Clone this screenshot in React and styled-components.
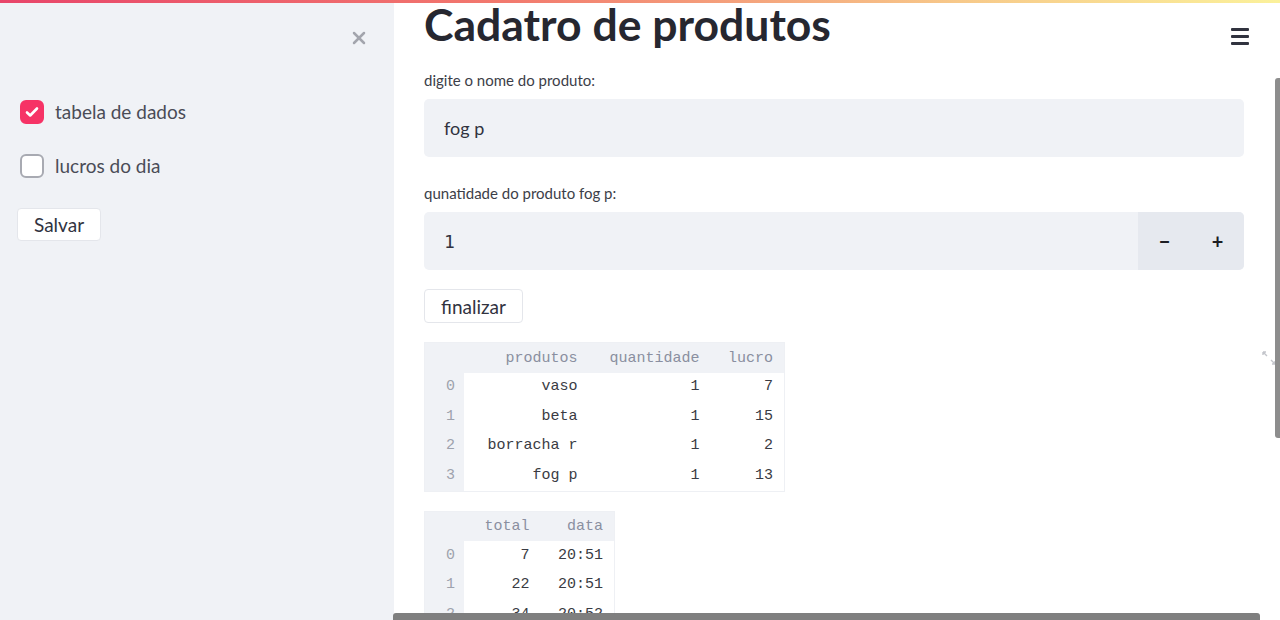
import React from 'react'
import styled, {createGlobalStyle} from 'styled-components'
import {X} from 'lucide-react'

const colors = {
  text: '#31333f',
  dark: '#262730',
  gray: '#f0f2f6',
  grayDark: '#e6e9ef',
  muted: '#8b8e99',
  accent: '#f63366',
}

const GlobalStyle = createGlobalStyle`
  html, body {
    margin: 0;
    padding: 0;
    height: 620px;
    overflow: hidden;
    background: #fff;
    font-family: Lato, "Noto Sans", sans-serif;
    color: ${colors.text};
  }
`

const Page = styled.div`
  position: relative;
  width: 1280px;
  height: 620px;
  overflow: hidden;
  display: flex;
`

// top decoration line, drawn over the page like streamlit's
const Decoration = styled.div`
  position: absolute;
  top: 0;
  left: 0;
  right: 0;
  height: 3px;
  z-index: 2;
  background: linear-gradient(90deg, #e8456a 0%, #f27a6e 40%, #f7c98a 75%, #fbf19b 100%);
`

const Sidebar = styled.aside`
  width: 394px;
  flex: none;
  background: ${colors.gray};
  padding: 3px 17px 0 17px;
  box-sizing: border-box;
  display: flex;
  flex-direction: column;
  align-items: flex-start;
  & > * {
    flex: none;
  }
`

const CloseRow = styled.div`
  align-self: stretch;
  display: flex;
  justify-content: flex-end;
  padding: 25px 8px 0 0;
  color: #a3a5ad;
  height: 22px;
`

const CheckRow = styled.label`
  display: flex;
  align-items: center;
  gap: 11px;
  margin-top: ${p => p.$top}px;
  margin-left: 3px;
  font-size: 19px;
  line-height: 22px;
  color: #4a4c56;
  height: 24px;
`

const Box = styled.span`
  width: 24px;
  height: 24px;
  box-sizing: border-box;
  border-radius: 6px;
  display: flex;
  align-items: center;
  justify-content: center;
  background: ${p => (p.$checked ? colors.accent : '#fff')};
  border: 2px solid ${p => (p.$checked ? colors.accent : '#a8aab2')};
`

const Button = styled.button`
  font-family: Lato, "Noto Sans", sans-serif;
  background: #fff;
  color: ${colors.text};
  border: 1px solid #e4e6eb;
  border-radius: 4px;
  padding: 0 ${p => p.$pad}px;
  height: ${p => p.$h}px;
  font-size: ${p => p.$size}px;
  margin-top: ${p => p.$top}px;
`

const Main = styled.main`
  flex: 1;
  padding: 0 36px 0 30px;
  display: flex;
  flex-direction: column;
  align-items: flex-start;
  & > * {
    flex: none;
  }
`

const Title = styled.h1`
  margin: 0;
  font-size: 44.5px;
  line-height: 48px;
  font-weight: 700;
  color: ${colors.dark};
`

const Label = styled.div`
  font-size: 15px;
  color: #3c3e48;
  margin-top: ${p => p.$top}px;
  line-height: 18px;
`

const Field = styled.div`
  align-self: stretch;
  margin-top: ${p => p.$top}px;
  height: 58px;
  background: ${colors.gray};
  border-radius: 5px;
  display: flex;
  align-items: center;
  overflow: hidden;
`

const FieldText = styled.span`
  flex: 1;
  padding-left: 20px;
  font-size: 18px;
  color: ${colors.text};
  font-family: ${p => (p.$mono ? '"DejaVu Sans Mono", monospace' : 'Lato, "Noto Sans", sans-serif')};
`

const Steppers = styled.div`
  width: 106px;
  height: 100%;
  background: ${colors.grayDark};
  display: flex;
`

const Step = styled.span`
  flex: 1;
  display: flex;
  align-items: center;
  justify-content: center;
  font-size: 20px;
  font-weight: 700;
  color: #1d1e24;
`

const Table = styled.table`
  margin-top: ${p => p.$top}px;
  border-collapse: collapse;
  font-family: "Liberation Mono", monospace;
  font-size: 15px;
  line-height: 18px;
  table-layout: fixed;
  border: 1px solid #eef0f4;
`

const Th = styled.th`
  background: ${colors.gray};
  color: #8a8fa0;
  font-weight: 400;
  text-align: right;
  height: 30px;
  padding: 2px 11px 0 0;
  width: ${p => p.$w}px;
  box-sizing: border-box;
`

const Idx = styled.th`
  background: ${colors.gray};
  color: #9ea2ad;
  font-weight: 400;
  text-align: left;
  padding: 0 0 0 21px;
  height: 29.5px;
`

const Td = styled.td`
  background: #fff;
  color: #3a3b43;
  text-align: right;
  padding: 0 11px 0 0;
  height: 29.5px;
`

const Hamburger = styled.div`
  position: absolute;
  top: 28px;
  right: 31px;
  width: 18px;
  display: flex;
  flex-direction: column;
  gap: 4.5px;
  span {
    height: 2.5px;
    background: #31333f;
    border-radius: 1px;
  }
`

const VScroll = styled.div`
  position: absolute;
  right: 0;
  top: 78px;
  width: 5px;
  height: 360px;
  background: #8d8d8d;
  border-radius: 3px 0 0 3px;
`

const HScroll = styled.div`
  position: absolute;
  left: 393px;
  bottom: 0;
  width: 867px;
  height: 7px;
  background: #7f7f7f;
  border-radius: 3px 3px 0 0;
`

const Expand = styled.div`
  position: absolute;
  right: 4px;
  top: 349px;
  color: #c3c5cb;
`

const DataTable = ({top, columns, widths, rows}) => (
  <Table $top={top}>
    <thead>
      <tr>
        <Th $w={39} />
        {columns.map((c, i) => (
          <Th key={c} $w={widths[i]}>{c}</Th>
        ))}
      </tr>
    </thead>
    <tbody>
      {rows.map((r, i) => (
        <tr key={i}>
          <Idx>{i}</Idx>
          {r.map((v, j) => (
            <Td key={j}>{v}</Td>
          ))}
        </tr>
      ))}
    </tbody>
  </Table>
)

const App = () => (
  <Page>
    <GlobalStyle />
    <Decoration />
    <Sidebar>
      <CloseRow>
        <X size={20} strokeWidth={3} />
      </CloseRow>
      <CheckRow $top={50}>
        <Box $checked>
          <svg width="16" height="16" viewBox="0 0 16 16">
            <path d="M3 8.5l3.2 3L13 4.5" fill="none" stroke="#fff" strokeWidth="2.6" strokeLinecap="round" strokeLinejoin="round" />
          </svg>
        </Box>
        tabela de dados
      </CheckRow>
      <CheckRow $top={30}>
        <Box />
        lucros do dia
      </CheckRow>
      <Button $top={30} $h={33} $size={19} $pad={16}>Salvar</Button>
    </Sidebar>
    <Main>
      <Title>Cadatro de produtos</Title>
      <Label $top={23}>digite o nome do produto:</Label>
      <Field $top={10}>
        <FieldText>fog p</FieldText>
      </Field>
      <Label $top={27}>qunatidade do produto fog p:</Label>
      <Field $top={10}>
        <FieldText $mono>1</FieldText>
        <Steppers>
          <Step>−</Step>
          <Step>+</Step>
        </Steppers>
      </Field>
      <Button $top={19} $h={34} $size={19} $pad={16}>finalizar</Button>
      <DataTable
        top={19}
        columns={['produtos', 'quantidade', 'lucro']}
        widths={[125, 122, 74]}
        rows={[
          ['vaso', 1, 7],
          ['beta', 1, 15],
          ['borracha r', 1, 2],
          ['fog p', 1, 13],
        ]}
      />
      <DataTable
        top={19}
        columns={['total', 'data']}
        widths={[77, 74]}
        rows={[
          [7, '20:51'],
          [22, '20:51'],
          [34, '20:52'],
        ]}
      />
    </Main>
    <Hamburger>
      <span />
      <span />
      <span />
    </Hamburger>
    <Expand>
      <svg width="14" height="14" viewBox="0 0 14 14" fill="none" stroke="currentColor" strokeWidth="1.4">
        <path d="M1 1l4 4M1 1h3M1 1v3M13 13l-4-4M13 13h-3M13 13v-3" />
      </svg>
    </Expand>
    <VScroll />
    <HScroll />
  </Page>
)

export default App
